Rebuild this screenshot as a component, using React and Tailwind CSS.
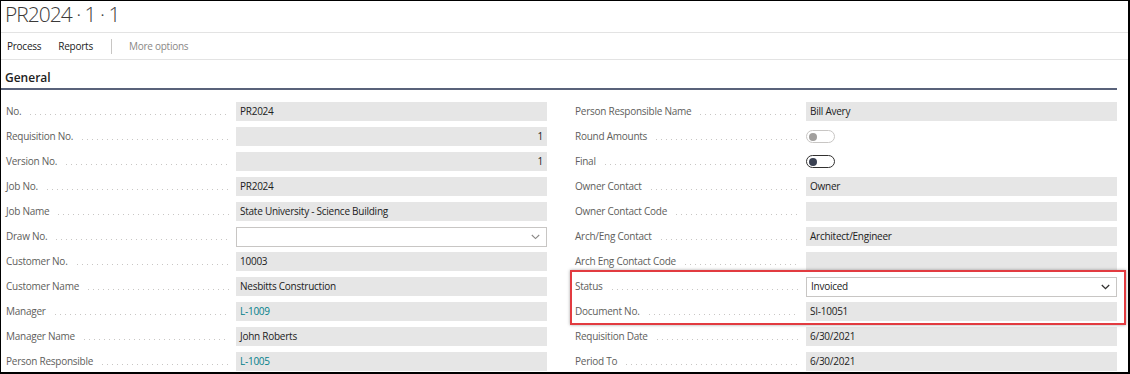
const leftRows = [
  { label: 'No.', value: 'PR2024' },
  { label: 'Requisition No.', value: '1', align: 'right' },
  { label: 'Version No.', value: '1', align: 'right' },
  { label: 'Job No.', value: 'PR2024' },
  { label: 'Job Name', value: 'State University - Science Building' },
  { label: 'Draw No.', value: '', type: 'select' },
  { label: 'Customer No.', value: '10003' },
  { label: 'Customer Name', value: 'Nesbitts Construction' },
  { label: 'Manager', value: 'L-1009', link: true },
  { label: 'Manager Name', value: 'John Roberts' },
  { label: 'Person Responsible', value: 'L-1005', link: true },
];

const rightTop = [
  { label: 'Person Responsible Name', value: 'Bill Avery' },
  { label: 'Round Amounts', type: 'toggle', disabled: true },
  { label: 'Final', type: 'toggle' },
  { label: 'Owner Contact', value: 'Owner' },
  { label: 'Owner Contact Code', value: '' },
  { label: 'Arch/Eng Contact', value: 'Architect/Engineer' },
  { label: 'Arch Eng Contact Code', value: '' },
];

const rightHighlighted = [
  { label: 'Status', value: 'Invoiced', type: 'select', dark: true },
  { label: 'Document No.', value: 'SI-10051' },
];

const rightBottom = [
  { label: 'Requisition Date', value: '6/30/2021' },
  { label: 'Period To', value: '6/30/2021' },
];

function Chevron({ dark }) {
  return (
    <svg width="9" height="6" viewBox="0 0 9 6" className="shrink-0">
      <polyline
        points="0.8,1 4.5,4.6 8.2,1"
        fill="none"
        stroke={dark ? '#323130' : '#8a8886'}
        strokeWidth={dark ? '1.3' : '1.1'}
      />
    </svg>
  );
}

function Toggle({ disabled }) {
  return (
    <div
      className={`w-[29px] h-[13px] rounded-full border flex items-center px-[2px] ${
        disabled ? 'border-[#c8c6c4]' : 'border-[#323130]'
      }`}
    >
      <div className={`w-[8px] h-[8px] rounded-full ${disabled ? 'bg-[#a19f9d]' : 'bg-[#3a4152]'}`} />
    </div>
  );
}

function Field({ row }) {
  if (row.type === 'toggle') {
    return (
      <div className="w-[311px] flex items-center">
        <Toggle disabled={row.disabled} />
      </div>
    );
  }
  if (row.type === 'select') {
    return (
      <div className="w-[311px] h-[20px] bg-white border border-[#c8c6c4] flex items-center justify-between pl-[4px] pr-[6px]">
        <span className="text-[#212121]">{row.value}</span>
        <Chevron dark={row.dark} />
      </div>
    );
  }
  return (
    <div
      className={`w-[311px] h-[19px] bg-[#e6e6e6] flex items-center px-[4px] ${
        row.align === 'right' ? 'justify-end' : ''
      }`}
    >
      <span className={row.link ? 'text-[#00808a]' : 'text-[#212121]'}>{row.value}</span>
    </div>
  );
}

function Row({ row }) {
  return (
    <div className="h-[25px] flex items-center">
      <div className="flex-1 flex items-center min-w-0">
        <span className="text-[#605e5c] whitespace-nowrap">{row.label}</span>
        <div className="flex-1 ml-[9px] mr-[7px] h-px bg-[linear-gradient(to_right,#c8c6c4_1px,transparent_1px)] bg-[length:5px_1px] bg-repeat-x translate-y-[3px]" />
      </div>
      <Field row={row} />
    </div>
  );
}

export default function App() {
  return (
    <div
      className="w-[1130px] h-[374px] overflow-hidden bg-white border-l border-t border-r-2 border-b-2 border-black text-[10px] tracking-[-0.25px]"
      style={{ fontFamily: '"Open Sans", "Noto Sans", sans-serif' }}
    >
      <div className="h-[32px] px-[4px] flex items-center border-b border-[#e3e3e3]">
        <h1 className="text-[21px] font-light text-[#3b3a39] leading-none tracking-[-1px] -mt-[4px]">
          PR2024 · 1 · 1
        </h1>
      </div>

      <div className="h-[27px] pl-[6px] flex items-center border-b border-[#e3e3e3] text-[#212121]">
        <span>Process</span>
        <span className="ml-[17px]">Reports</span>
        <div className="ml-[18px] w-px h-[15px] bg-[#c8c6c4]" />
        <span className="ml-[17px] text-[#8a8886]">More options</span>
      </div>

      <div className="mr-[11px] h-[30px] pl-[4px] flex items-center border-b-2 border-[#59627a]">
        <h2 className="text-[12px] font-semibold tracking-normal text-[#212121] mt-[7px]">General</h2>
      </div>

      <div className="pt-[9px] pl-[5px] grid grid-cols-[541px_542px] gap-x-[28px]">
        <div>
          {leftRows.map((row) => (
            <Row key={row.label} row={row} />
          ))}
        </div>
        <div>
          {rightTop.map((row) => (
            <Row key={row.label} row={row} />
          ))}
          <div className="relative">
            {rightHighlighted.map((row) => (
              <Row key={row.label} row={row} />
            ))}
            <div className="absolute left-[-5px] right-[-9px] top-[-4px] bottom-[-1px] border-2 border-[#e23b40] shadow-[0_0_3px_rgba(0,0,0,0.35)] pointer-events-none" />
          </div>
          {rightBottom.map((row) => (
            <Row key={row.label} row={row} />
          ))}
        </div>
      </div>
    </div>
  );
}
